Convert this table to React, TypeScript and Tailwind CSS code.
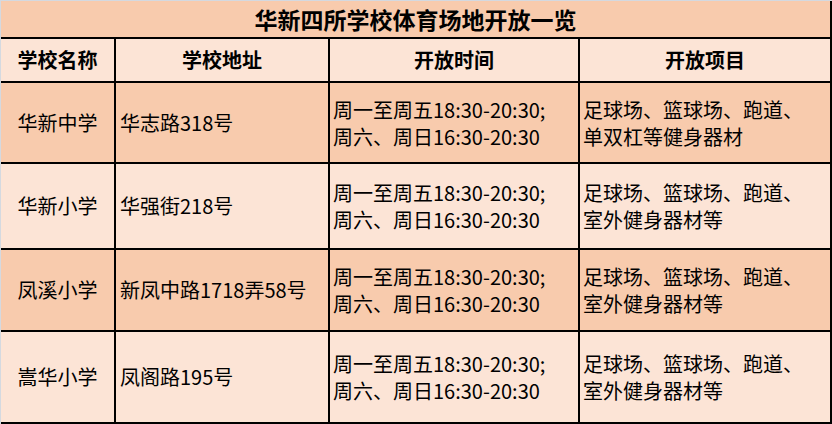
import React from "react";

const rows = [
  {
    name: "华新中学",
    addr: "华志路318号",
    items: ["足球场、篮球场、跑道、", "单双杠等健身器材"],
    dark: true,
    h: "h-[81px]",
  },
  {
    name: "华新小学",
    addr: "华强街218号",
    items: ["足球场、篮球场、跑道、", "室外健身器材等"],
    dark: false,
    h: "h-[86px]",
  },
  {
    name: "凤溪小学",
    addr: "新凤中路1718弄58号",
    items: ["足球场、篮球场、跑道、", "室外健身器材等"],
    dark: true,
    h: "h-[82px]",
  },
  {
    name: "嵩华小学",
    addr: "凤阁路195号",
    items: ["足球场、篮球场、跑道、", "室外健身器材等"],
    dark: false,
    h: "h-[92px]",
  },
];

const cell = "border-r-2 border-b-2 border-black flex items-center";

const App: React.FC = () => {
  return (
    <div
      className="w-[832px] h-[424px] bg-white border-t border-l border-[#d4d9e0] text-black overflow-hidden"
      style={{ fontFamily: '"Noto Sans CJK SC", "Liberation Sans", sans-serif' }}
    >
      <div className="grid grid-cols-[115px_214px_250px_252px]">
        <div className={`${cell} col-span-4 h-[38px] bg-[#f8cbad] justify-center text-[23px] font-bold`}>
          华新四所学校体育场地开放一览
        </div>

        <div className={`${cell} h-[44px] bg-[#fce4d6] justify-center text-[20px] font-bold`}>学校名称</div>
        <div className={`${cell} h-[44px] bg-[#fce4d6] justify-center text-[20px] font-bold`}>学校地址</div>
        <div className={`${cell} h-[44px] bg-[#fce4d6] justify-center text-[20px] font-bold`}>开放时间</div>
        <div className={`${cell} h-[44px] bg-[#fce4d6] justify-center text-[20px] font-bold`}>开放项目</div>

        {rows.map((r) => {
          const bg = r.dark ? "bg-[#f8cbad]" : "bg-[#fce4d6]";
          return (
            <React.Fragment key={r.name}>
              <div className={`${cell} ${r.h} ${bg} justify-center text-[20px]`}>{r.name}</div>
              <div className={`${cell} ${r.h} ${bg} pl-[4px] text-[20px] whitespace-nowrap`}>{r.addr}</div>
              <div className={`${cell} ${r.h} ${bg} pl-[3px] text-[20px] leading-[27px] whitespace-nowrap`}>
                <div>
                  周一至周五18:30-20:30;
                  <br />
                  周六、周日16:30-20:30
                </div>
              </div>
              <div className={`${cell} ${r.h} ${bg} pl-[3px] text-[20px] leading-[27px] whitespace-nowrap`}>
                <div>
                  {r.items[0]}
                  <br />
                  {r.items[1]}
                </div>
              </div>
            </React.Fragment>
          );
        })}
      </div>
    </div>
  );
};

export default App;
